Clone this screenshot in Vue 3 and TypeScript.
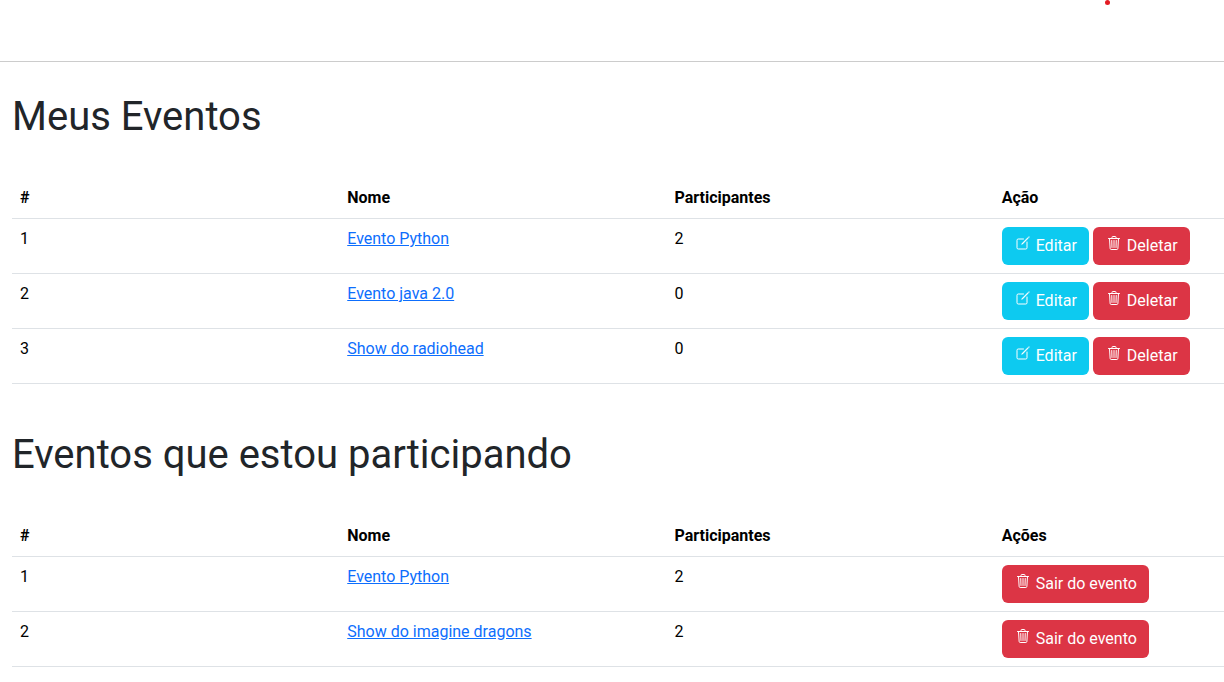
<script setup lang="ts">
interface EventItem {
  id: number
  name: string
  participants: number
}

interface EventSection {
  key: string
  title: string
  actionsLabel: string
  owned: boolean
  events: EventItem[]
}

const sections: EventSection[] = [
  {
    key: 'owned',
    title: 'Meus Eventos',
    actionsLabel: 'Ação',
    owned: true,
    events: [
      { id: 1, name: 'Evento Python', participants: 2 },
      { id: 2, name: 'Evento java 2.0', participants: 0 },
      { id: 3, name: 'Show do radiohead', participants: 0 },
    ],
  },
  {
    key: 'joined',
    title: 'Eventos que estou participando',
    actionsLabel: 'Ações',
    owned: false,
    events: [
      { id: 1, name: 'Evento Python', participants: 2 },
      { id: 2, name: 'Show do imagine dragons', participants: 2 },
    ],
  },
]
</script>

<template>
  <div class="page">
    <header class="topbar">
      <span class="dot" aria-hidden="true"></span>
    </header>
    <main class="content">
      <section v-for="section in sections" :key="section.key" class="section">
        <h1 :id="`title-${section.key}`" class="title">{{ section.title }}</h1>
        <table class="table" :aria-labelledby="`title-${section.key}`">
          <thead>
            <tr>
              <th scope="col" class="data-col">#</th>
              <th scope="col" class="data-col">Nome</th>
              <th scope="col" class="data-col">Participantes</th>
              <th scope="col">{{ section.actionsLabel }}</th>
            </tr>
          </thead>
          <tbody>
            <tr v-for="event in section.events" :key="event.id">
              <td>{{ event.id }}</td>
              <td><a href="#">{{ event.name }}</a></td>
              <td>{{ event.participants }}</td>
              <td>
                <div class="actions">
                  <a v-if="section.owned" href="#" class="btn info">
                    <svg class="icon" viewBox="0 0 512 512" aria-hidden="true">
                      <path class="line" d="M384 224v184a40 40 0 01-40 40H104a40 40 0 01-40-40V168a40 40 0 0140-40h167.48" />
                      <path class="solid" d="M459.94 53.25a16.06 16.06 0 00-23.22-.56L424.35 65a8 8 0 000 11.31l11.34 11.32a8 8 0 0011.34 0l12.06-12c6.1-6.09 6.67-16.01.85-22.38zM399.34 90L218.82 270.2a9 9 0 00-2.31 3.93L208.16 299a3.91 3.91 0 004.86 4.86l24.85-8.35a9 9 0 003.93-2.31L422 112.66a9 9 0 000-12.66l-9.95-10a9 9 0 00-12.71 0z" />
                    </svg>
                    Editar
                  </a>
                  <button type="button" class="btn danger">
                    <svg class="icon" viewBox="0 0 512 512" aria-hidden="true">
                      <path class="line" d="M112 112l20 320c.95 18.49 14.4 32 32 32h184c17.67 0 30.87-13.51 32-32l20-320" />
                      <path class="line" d="M80 112h352" />
                      <path class="line" d="M192 112V72h0a23.93 23.93 0 0124-24h80a23.93 23.93 0 0124 24h0v40M256 176v224M184 176l8 224M328 176l-8 224" />
                    </svg>
                    {{ section.owned ? 'Deletar' : 'Sair do evento' }}
                  </button>
                </div>
              </td>
            </tr>
          </tbody>
        </table>
      </section>
    </main>
  </div>
</template>

<style>
body {
  margin: 0;
  background: #fff;
}
</style>

<style scoped>
.page {
  font-family: Roboto, "Liberation Sans", sans-serif;
  font-size: 16px;
  line-height: 24px;
  color: #212529;
}

.topbar {
  position: relative;
  height: 61px;
  border-bottom: 1px solid #ccc;
}

.dot {
  position: absolute;
  top: 0;
  right: 114px;
  width: 5px;
  height: 5px;
  border-radius: 50%;
  background: #e31b23;
}

.content {
  display: flex;
  flex-direction: column;
  gap: 46px;
  padding: 31px 0 16px 12px;
}

.title {
  margin: 0 0 37px;
  font-size: 40px;
  line-height: 48px;
  font-weight: 400;
}

.section + .section {
  padding-top: 1px;
}

.table {
  width: 100%;
  table-layout: fixed;
  border-collapse: separate;
  border-spacing: 0;
  color: #000;
}

.data-col {
  width: 27%;
}

th,
td {
  box-sizing: border-box;
  padding: 8px;
  border-bottom: 1px solid #dee2e6;
  text-align: left;
  vertical-align: top;
}

td a {
  color: #0d6efd;
}

.actions {
  display: flex;
  gap: 4px;
}

.actions .btn {
  padding: 7px 12px 7px 13px;
  border: 0;
  border-radius: 6px;
  font: inherit;
  color: #fff;
  text-decoration: none;
  white-space: nowrap;
  cursor: pointer;
}

.info {
  background: #0dcaf0;
}

.danger {
  background: #dc3545;
}

.icon {
  width: 16px;
  height: 16px;
  margin-right: 1px;
}

.line {
  fill: none;
  stroke: currentColor;
  stroke-width: 32;
  stroke-linecap: round;
  stroke-linejoin: round;
}

.solid {
  fill: currentColor;
  stroke: currentColor;
  stroke-width: 8;
}
</style>
